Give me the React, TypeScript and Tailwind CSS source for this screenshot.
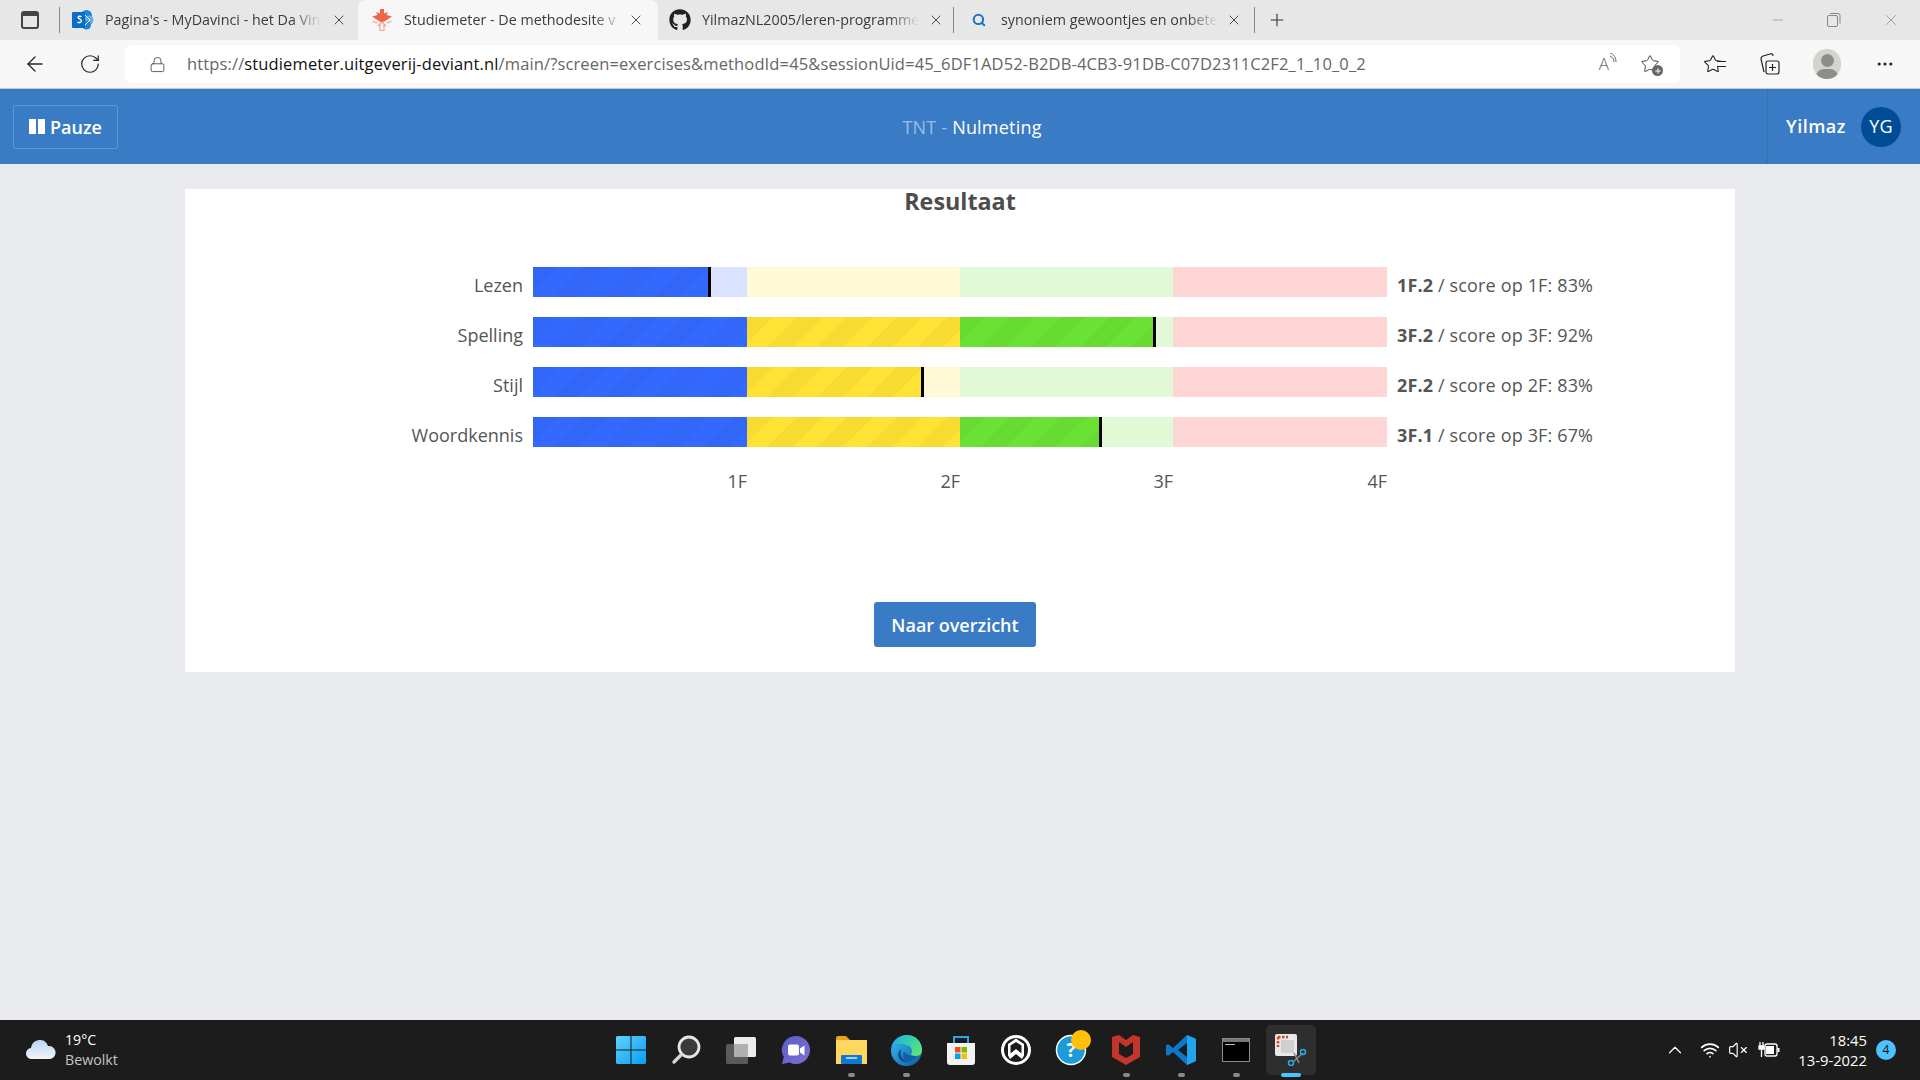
import React from "react";
import { FaGithub } from "react-icons/fa";
import { ArrowLeft, RotateCw, Lock, X, Plus, Minus, Search, ChevronUp, VolumeX, Wifi, Star, MoreHorizontal } from "lucide-react";

const STRIPE = "bg-[repeating-linear-gradient(135deg,rgba(0,0,0,0.03)_0,rgba(0,0,0,0.03)_17.7px,transparent_17.7px,transparent_35.4px)]";

const colors = [
  { light: "bg-[#d9e2ff]", solid: "bg-[#3369ff]" },
  { light: "bg-[#fff9d6]", solid: "bg-[#ffe234]" },
  { light: "bg-[#e1f9d6]", solid: "bg-[#6ae234]" },
  { light: "bg-[#ffd6d6]", solid: "bg-[#ff3434]" },
];
const rows = [
  { label: "Lezen", fills: [178, 0, 0, 0], level: "1F.2", rest: " / score op 1F: 83%" },
  { label: "Spelling", fills: [214, 213, 196, 0], level: "3F.2", rest: " / score op 3F: 92%" },
  { label: "Stijl", fills: [214, 177, 0, 0], level: "2F.2", rest: " / score op 2F: 83%" },
  { label: "Woordkennis", fills: [214, 213, 142, 0], level: "3F.1", rest: " / score op 3F: 67%" },
];
const SEGW = [214, 213, 213, 214];

function Bar({ fills }: { fills: number[] }) {
  const last = fills.reduce((a, f, i) => (f > 0 ? i : a), 0);
  return (
    <div className="flex h-[30px] w-[854px]">
      {SEGW.map((w, i) => (
        <div key={i} className={`h-full ${colors[i].light}`} style={{ width: w }}>
          {fills[i] > 0 && (
            <div className={`relative h-full ${colors[i].solid}`} style={{ width: fills[i] }}>
              <div className={`h-full w-full ${STRIPE}`} />
              {i === last && fills[i] < w && <div className="absolute right-0 top-0 h-full w-[3px] bg-black" />}
            </div>
          )}
        </div>
      ))}
    </div>
  );
}

function TabTitle({ children, w }: { children: React.ReactNode; w: string }) {
  return (
    <div className={`${w} -mt-[1px] whitespace-nowrap text-[14.300px] text-[#3b3b3b] [mask-image:linear-gradient(to_right,black_86%,transparent)]`}>
      {children}
    </div>
  );
}

function Close() {
  return <X size={16} strokeWidth={1.3} className="text-[#333]" />;
}

function SharePoint() {
  return (
    <svg width="22" height="22" viewBox="0 0 22 22">
      <circle cx="14.500" cy="6.500" r="5.500" fill="#1b86d6" />
      <circle cx="17" cy="11" r="4.500" fill="#5fb0ea" />
      <circle cx="14.500" cy="16" r="4.500" fill="#1b86d6" />
      <path d="M12 5l6 6-6 6" fill="none" stroke="#fff" strokeWidth="1" />
      <rect x="0" y="3" width="13" height="16" rx="1" fill="#0b6cc4" />
      <path d="M9.500 7.700c-1-.6-3.400-.9-3.400.8 0 1.600 3.300 1.100 3.300 3.300 0 2-2.800 2-4 1.300" fill="none" stroke="#fff" strokeWidth="1.400" />
    </svg>
  );
}

function Maple() {
  return (
    <svg width="22" height="22" viewBox="0 0 22 22">
      <path d="M9 0h4v4.500L17 3l-1.500 3L21 7.500 14 12l-3 1.500L8 12 1 7.500 6.500 6 5 3l4 1.500z" fill="#ee6448" />
      <path d="M1.500 12.500l5 1.500M20.500 12.500l-5 1.500M9 21.500h4v-5.500l2 1-4-4-4 4 2-1z" fill="none" stroke="#f2a08e" strokeWidth="1.100" />
    </svg>
  );
}

function TaskIcon({ children, dot, active }: { children: React.ReactNode; dot?: boolean; active?: boolean }) {
  return (
    <div className="relative flex h-[50px] w-[55px] items-center justify-center">
      {active && <div className="absolute inset-y-0 left-[2px] w-[50px] rounded-[5px] bg-[#2e2e2e]" />}
      <div className="relative flex">{children}</div>
      {dot && <div className="absolute bottom-[-2px] left-[24px] h-[4px] w-[7px] rounded-full bg-[#8a8a8a]" />}
      {active && <div className="absolute bottom-[-2px] left-[17px] h-[4px] w-[20px] rounded-full bg-[#4cc2ff]" />}
    </div>
  );
}

function Taskbar() {
  return (
    <div className="flex h-[60px] items-center bg-[#1c1c1c] text-white">
      <div className="flex flex-1 items-center pl-[26px]">
        <svg width="30" height="22" viewBox="0 0 30 22">
          <defs>
            <linearGradient id="cl" x1="0" y1="0" x2="0" y2="1">
              <stop offset="0" stopColor="#b9d6f5" />
              <stop offset="1" stopColor="#f2f5f8" />
            </linearGradient>
          </defs>
          <path d="M6 20a5.500 5.500 0 0 1-1-11C6 3 10 1 14.500 1c4 0 6.500 3 7.500 6a6.500 6.500 0 0 1 2 13z" fill="url(#cl)" />
        </svg>
        <div className="ml-[9px] font-['Open_Sans',sans-serif] text-[14.200px] leading-[20px]">
          <div>19°C</div>
          <div className="text-[#c4c4c4]">Bewolkt</div>
        </div>
      </div>
      <div className="flex">
        <TaskIcon>
          <svg width="30" height="30" viewBox="0 0 30 30">
            <defs>
              <linearGradient id="win" x1="0" y1="0" x2="1" y2="1">
                <stop offset="0" stopColor="#5fd4fb" />
                <stop offset="1" stopColor="#0a9bf5" />
              </linearGradient>
            </defs>
            <path d="M1 1h13.500v13.500H0V2zM15.500 1H29l1 1v12.500H15.500zM0 15.500h14.500V29H1l-1-1zM15.500 15.500H30V28l-1 1H15.500z" fill="url(#win)" />
          </svg>
        </TaskIcon>
        <TaskIcon>
          <svg width="30" height="30" viewBox="0 0 30 30">
            <circle cx="18" cy="12" r="10" fill="#3a3a3a" stroke="#e6e6e6" strokeWidth="2.800" />
            <path d="M10.500 19.500L3 27" stroke="#d5d5d5" strokeWidth="3.400" strokeLinecap="round" />
          </svg>
        </TaskIcon>
        <TaskIcon>
          <svg width="30" height="28" viewBox="0 0 30 28">
            <rect x="8" y="1" width="22" height="20" rx="1.500" fill="#ececec" />
            <rect x="0" y="8" width="22" height="20" rx="1.500" fill="#5a5a5a" />
            <rect x="8" y="8" width="14" height="13" fill="#b0b0b0" />
          </svg>
        </TaskIcon>
        <TaskIcon>
          <svg width="30" height="30" viewBox="0 0 30 30">
            <defs>
              <linearGradient id="tm" x1="0" y1="0" x2="1" y2="1">
                <stop offset="0" stopColor="#5b5fc7" />
                <stop offset="1" stopColor="#7b6fd6" />
              </linearGradient>
            </defs>
            <path d="M15 1a14 14 0 1 1-6.500 26.400L1 29l1.800-7A14 14 0 0 1 15 1z" fill="url(#tm)" />
            <rect x="7" y="9.500" width="11" height="11" rx="2" fill="#fff" />
            <path d="M19 13.500l4.500-3v10l-4.500-3z" fill="#fff" />
          </svg>
        </TaskIcon>
        <TaskIcon dot>
          <svg width="31" height="28" viewBox="0 0 31 28">
            <path d="M0 2a2 2 0 0 1 2-2h8l4 4H0z" fill="#e8a317" />
            <rect x="0" y="4" width="31" height="24" fill="#ffd75e" />
            <rect x="5" y="19" width="21" height="9" rx="1" fill="#0f78d4" />
            <rect x="10" y="21" width="11" height="2" fill="#9fd0f5" />
          </svg>
        </TaskIcon>
        <TaskIcon dot>
          <svg width="31" height="31" viewBox="0 0 31 31">
            <defs>
              <linearGradient id="e1" x1="0" y1="0" x2="1" y2="1">
                <stop offset="0" stopColor="#35c1f1" />
                <stop offset="1" stopColor="#0c59a4" />
              </linearGradient>
              <linearGradient id="e2" x1="0" y1="0" x2="1" y2="1">
                <stop offset="0" stopColor="#1bb8d8" />
                <stop offset="1" stopColor="#66eb6e" />
              </linearGradient>
            </defs>
            <circle cx="15.500" cy="15.500" r="15.500" fill="url(#e1)" />
            <path d="M5 9C7 3 12 0 16 0c8 0 15 6 15 15 0 3-2 6-6 6-3 0-5-1-5-2 2-2 1-6-2-8C13 8 7 8 5 9z" fill="url(#e2)" />
            <path d="M11 14c-3 4-1 11 6 13-5 1-9-2-10-7 0-3 2-5 4-6z" fill="#114a8b" />
            <path d="M13 16c1 3 5 5 12 5-2 4-7 6-8 6-5-2-6-7-4-11z" fill="#0f5ea8" />
          </svg>
        </TaskIcon>
        <TaskIcon>
          <svg width="30" height="30" viewBox="0 0 30 30">
            <path d="M1 8h28v19a3 3 0 0 1-3 3H4a3 3 0 0 1-3-3z" fill="#f3f3f3" />
            <path d="M8 8V2h14v6" fill="none" stroke="#29a8e8" strokeWidth="2" />
            <rect x="9" y="12" width="5.500" height="5.500" fill="#f25022" />
            <rect x="15.500" y="12" width="5.500" height="5.500" fill="#7fba00" />
            <rect x="9" y="18.500" width="5.500" height="5.500" fill="#00a4ef" />
            <rect x="15.500" y="18.500" width="5.500" height="5.500" fill="#ffb900" />
          </svg>
        </TaskIcon>
        <TaskIcon>
          <svg width="30" height="30" viewBox="0 0 30 30">
            <circle cx="15" cy="15" r="15" fill="#fff" />
            <circle cx="15" cy="15" r="12" fill="#1c1c1c" />
            <path d="M15 3.500l8 5.500v11.500l-2 3.500-6-5-6 5-2-3.500V9z" fill="#fff" />
            <path d="M15 7l5.500 3.500v8L15 14l-5.500 4.500v-8z" fill="#1c1c1c" />
          </svg>
        </TaskIcon>
        <TaskIcon>
          <svg width="40" height="40" viewBox="0 0 40 40">
            <circle cx="20" cy="20" r="14.500" fill="#1d9bd8" stroke="#fff" strokeWidth="1.500" />
            <text x="20" y="27" textAnchor="middle" fontSize="19" fontWeight="700" fill="#fff" fontFamily="Open Sans">?</text>
            <circle cx="30" cy="10" r="10" fill="#ffc107" />
          </svg>
        </TaskIcon>
        <TaskIcon dot>
          <svg width="28" height="30" viewBox="0 0 28 30">
            <path d="M0 2l7-2 7 5 7-5 7 2v20l-14 8-14-8z" fill="#c1352c" />
            <path d="M7 7l7 5 7-5v12l-7 4-7-4z" fill="#1c1c1c" />
          </svg>
        </TaskIcon>
        <TaskIcon dot>
          <svg width="30" height="30" viewBox="0 0 30 30">
            <path d="M21 0l9 4v22l-9 4L7 17l-5 4-2-1.500v-9L2 9l5 4z" fill="#0e78c8" />
            <path d="M21 0l9 4v22l-9 4z" fill="#23a3ee" />
            <path d="M21 8L12 15l9 7z" fill="#1c1c1c" />
          </svg>
        </TaskIcon>
        <TaskIcon dot>
          <div className="h-[24px] w-[28px] border border-[#8a8a8a] bg-black">
            <div className="h-[3px] bg-[#777]" />
            <div className="ml-[2px] mt-[2px] h-[1px] w-[10px] bg-[#bbb]" />
          </div>
        </TaskIcon>
        <TaskIcon active>
          <svg width="32" height="32" viewBox="0 0 32 32">
            <rect x="0" y="0" width="22" height="22" rx="2" fill="#e8e8e8" />
            <rect x="6" y="6" width="13" height="13" fill="#cfcfcf" />
            <path d="M3 3h10M3 3v10" stroke="#d8452c" strokeWidth="2.500" strokeDasharray="2.500 1.500" fill="none" />
            <path d="M19 19l5 10M28 19l-10 9" stroke="#8a8a8a" strokeWidth="1.500" />
            <circle cx="28" cy="18" r="2.500" fill="none" stroke="#29a8e8" strokeWidth="1.500" />
            <circle cx="16" cy="29" r="2.500" fill="none" stroke="#29a8e8" strokeWidth="1.500" />
          </svg>
        </TaskIcon>
      </div>
      <div className="flex flex-1 items-center justify-end pr-[24px]">
        <ChevronUp size={22} strokeWidth={1.300} className="mr-[14px]" />
        <Wifi size={20} strokeWidth={2} className="mr-[8px]" />
        <VolumeX size={20} strokeWidth={1.400} className="mr-[10px]" />
        <svg width="22" height="18" viewBox="0 0 22 18" className="mr-[18px]">
          <rect x="7" y="3" width="12" height="12" rx="2" fill="none" stroke="#fff" strokeWidth="1.300" />
          <rect x="8" y="5" width="8" height="8" fill="#fff" />
          <rect x="19.500" y="7" width="2" height="4" fill="#fff" />
          <path d="M2 1v4M5 1v4M1 5h5v3H1zM3.500 8v8" stroke="#fff" strokeWidth="1.300" fill="#fff" />
        </svg>
        <div className="text-right font-['Open_Sans',sans-serif] text-[14.800px] leading-[20px]">
          <div>18:45</div>
          <div>13-9-2022</div>
        </div>
        <div className="ml-[9px] flex h-[20px] w-[20px] items-center justify-center rounded-full bg-[#4cc2ff] font-['Open_Sans',sans-serif] text-[12px] text-[#111]">4</div>
      </div>
    </div>
  );
}

function Browser() {
  return (
    <div className="font-['Open_Sans',sans-serif]">
      <div className="flex h-[40px] items-center bg-[#e7e7e7]">
        <div className="flex w-[59px] justify-center">
          <div className="h-[18px] w-[18px] rounded-[3px] border-2 border-[#444]">
            <div className="h-[3px] bg-[#444]" />
          </div>
        </div>
        <div className="h-[26px] w-px bg-[#888]" />
        <div className="flex h-full w-[298px] items-center pl-[11px]">
          <div className="ml-[1px]"><SharePoint /></div>
          <div className="ml-[11px]"><TabTitle w="w-[217px]">Pagina's - MyDavinci - het Da Vin</TabTitle></div>
          <div className="ml-[9px]"><Close /></div>
        </div>
        <div className="flex h-full w-[300px] items-center rounded-t-[8px] bg-[#f7f7f7] pl-[13px]">
          <Maple />
          <div className="ml-[11px]"><TabTitle w="w-[220px]">Studiemeter - De methodesite v</TabTitle></div>
          <div className="ml-[4px]"><Close /></div>
        </div>
        <div className="flex h-full w-[295px] items-center pl-[11px]">
          <FaGithub size={22} color="#222" />
          <div className="ml-[11px]"><TabTitle w="w-[217px]">YilmazNL2005/leren-programme</TabTitle></div>
          <div className="ml-[9px]"><Close /></div>
        </div>
        <div className="h-[26px] w-px bg-[#888]" />
        <div className="flex h-full w-[300px] items-center pl-[18px]">
          <Search size={14} strokeWidth={3.500} className="text-[#1a73c8]" />
          <div className="ml-[15px]"><TabTitle w="w-[217px]">synoniem gewoontjes en onbete</TabTitle></div>
          <div className="ml-[8px]"><Close /></div>
        </div>
        <div className="h-[26px] w-px bg-[#888]" />
        <div className="ml-[12px]"><Plus size={20} strokeWidth={1.300} className="text-[#333]" /></div>
        <div className="flex flex-1 items-center justify-end gap-[41px] pr-[20px] text-[#888]">
          <Minus size={16} strokeWidth={1} />
          <svg width="14" height="14" viewBox="0 0 14 14" fill="none" stroke="#888">
            <rect x="0.500" y="2.500" width="10" height="11" rx="1.500" />
            <path d="M3 0.500h8a2 2 0 0 1 2 2v8" />
          </svg>
          <X size={18} strokeWidth={1} />
        </div>
      </div>
      <div className="flex h-[49px] items-center border-b border-[#c8c8c8] bg-[#f7f7f7]">
        <div className="flex w-[125px] items-center pl-[23px] text-[#222]">
          <ArrowLeft size={24} strokeWidth={1.300} />
          <RotateCw size={22} strokeWidth={1.300} className="ml-[32px]" />
        </div>
        <div className="flex h-[38px] w-[1555px] items-center rounded-[6px] bg-white pl-[24px]">
          <Lock size={17} strokeWidth={1.200} className="text-[#444]" />
          <div className="ml-[21px] flex-1 whitespace-nowrap text-[16.500px] tracking-[0.13px] text-[#666]">
            https://<span className="text-[#111]">studiemeter.uitgeverij-deviant.nl</span>/main/?screen=exercises&amp;methodId=45&amp;sessionUid=45_6DF1AD52-B2DB-4CB3-91DB-C07D2311C2F2_1_10_0_2
          </div>
          <div className="mr-[23px] flex items-center text-[#666]">
            <span className="text-[17px] font-light">A</span>
            <svg width="8" height="14" viewBox="0 0 8 14" fill="none" stroke="#666" className="-mt-[8px]"><path d="M1 3c3 1 4 4 4 6M1 0c4 1 6 5 6 9" /></svg>
          </div>
          <div className="relative mr-[20px]">
            <Star size={20} strokeWidth={1.200} className="text-[#444]" />
            <div className="absolute bottom-[-2px] right-[-3px] flex h-[11px] w-[11px] items-center justify-center rounded-full bg-[#666]">
              <Plus size={8} strokeWidth={3} color="#fff" />
            </div>
          </div>
        </div>
        <div className="flex flex-1 items-center pl-[23px] text-[#222]">
          <div className="relative">
            <Star size={20} strokeWidth={1.300} />
            <div className="absolute right-[-3px] top-[7px] h-[6px] w-[9px] border-y border-[#222] bg-[#f7f7f7]" />
          </div>
          <svg width="22" height="24" viewBox="0 0 22 24" fill="none" stroke="#222" strokeWidth="1.200" className="ml-[36px]">
            <path d="M5 20L2 7a3 3 0 0 1 2-3l7-2a2 2 0 0 1 3 2" />
            <rect x="7" y="9" width="13" height="13" rx="2" />
            <path d="M13.500 12v7M10 15.500h7" />
          </svg>
          <div className="relative ml-[32px] h-[30px] w-[28px] overflow-hidden rounded-full bg-[#d4d3d0]">
            <div className="absolute left-[8px] top-[5px] h-[13px] w-[13px] rounded-full bg-[#8f8d8a]" />
            <div className="absolute left-[3px] top-[20px] h-[16px] w-[22px] rounded-full bg-[#8f8d8a]" />
          </div>
          <MoreHorizontal size={20} strokeWidth={1.800} className="ml-[34px]" />
        </div>
      </div>
    </div>
  );
}

function AppHeader() {
  return (
    <div className="flex h-[75px] items-center bg-[#3a7bc5] font-['Open_Sans',sans-serif] text-[18px] text-white">
      <div className="flex flex-1 pl-[13px]">
        <div className="flex h-[44px] w-[105px] items-center rounded-[2px] border border-white/20 pl-[15px] font-semibold">
          <div className="flex gap-[2px]">
            <div className="h-[15px] w-[7px] bg-white" />
            <div className="h-[15px] w-[7px] bg-white" />
          </div>
          <span className="ml-[5px] mt-[1px]">Pauze</span>
        </div>
      </div>
      <div className="ml-[11px] mt-[1px] text-center tracking-[0.2px]">
        <span className="text-white/50">TNT - </span>Nulmeting
      </div>
      <div className="flex h-full flex-1 justify-end">
        <div className="flex h-full w-[153px] items-center border-l border-[#3570b3] pl-[18px] font-semibold">
          <span className="tracking-[0.5px]">Yilmaz</span>
          <div className="ml-[15px] flex h-[40px] w-[40px] items-center justify-center rounded-full bg-[#004c97] font-normal">YG</div>
        </div>
      </div>
    </div>
  );
}

export default function App() {
  return (
    <div className="flex h-[1080px] w-[1920px] flex-col overflow-hidden bg-[#e8eaed]">
      <Browser />
      <AppHeader />
      <main className="flex-1 px-[185px] pt-[25px] font-['Open_Sans',sans-serif] text-[#555]">
        <div className="h-[483px] bg-white">
          <h1 className="text-center text-[23.300px] font-bold leading-[25px] text-[#4d4d4d]">Resultaat</h1>
          <div className="mt-[53px] flex flex-col gap-[20px]">
            {rows.map((r) => (
              <div key={r.label} className="flex h-[30px] items-center">
                <div className="w-[348px] pr-[10px] pt-[5px] text-right text-[18px] leading-[30px]">{r.label}</div>
                <Bar fills={r.fills} />
                <div className="pl-[10px] pt-[5px] text-[18px] leading-[30px] tracking-[0.15px]">
                  <b className="font-bold">{r.level}</b>
                  {r.rest}
                </div>
              </div>
            ))}
          </div>
          <div className="ml-[348px] mt-[21px] flex w-[854px] text-right text-[18px] leading-[26px]">
            <div className="w-[214px]">1F</div>
            <div className="w-[213px]">2F</div>
            <div className="w-[213px]">3F</div>
            <div className="w-[214px]">4F</div>
          </div>
          <div className="mt-[108px] flex justify-center pr-[10px]">
            <div className="flex h-[45px] w-[162px] items-center justify-center rounded-[3px] bg-[#3a7bc5] pt-[1px] text-[18px] font-semibold text-white">
              Naar overzicht
            </div>
          </div>
        </div>
      </main>
      <Taskbar />
    </div>
  );
}
